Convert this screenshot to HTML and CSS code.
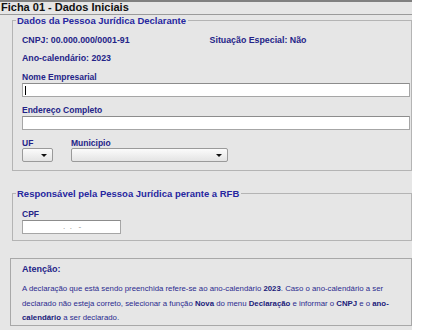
FILE: index.html
```html
<!DOCTYPE html>
<html lang="pt">
<head>
    <meta charset="UTF-8">
    <title>Ficha 01 - Dados Iniciais</title>
    <link rel="stylesheet" href="styles.css">
</head>
<body>
    <div class="page">
        <div class="title-bar">Ficha 01 - Dados Iniciais</div>

        <fieldset class="group group-pj">
            <legend>Dados da Pessoa Jurídica Declarante</legend>
            <div class="info-row first">
                <span class="info">CNPJ: 00.000.000/0001-91</span>
                <span class="info info-right">Situação Especial: Não</span>
            </div>
            <div class="info-row">
                <span class="info">Ano-calendário: 2023</span>
            </div>
            <div class="field">
                <label class="label">Nome Empresarial</label>
                <div class="text-box full caret"></div>
            </div>
            <div class="field">
                <label class="label">Endereço Completo</label>
                <div class="text-box full"></div>
            </div>
            <div class="field field-inline">
                <div class="field-col">
                    <label class="label">UF</label>
                    <div class="select-box uf"><span class="arrow"></span></div>
                </div>
                <div class="field-col">
                    <label class="label">Municipio</label>
                    <div class="select-box municipio"><span class="arrow"></span></div>
                </div>
            </div>
        </fieldset>

        <fieldset class="group group-resp">
            <legend>Responsável pela Pessoa Jurídica perante a RFB</legend>
            <div class="field first">
                <label class="label">CPF</label>
                <div class="text-box cpf"><span class="mask">.&nbsp;&nbsp;.&nbsp;&nbsp;&nbsp;-</span></div>
            </div>
        </fieldset>

        <div class="notice">
            <div class="notice-title">Atenção:</div>
            <p class="notice-text">A declaração que está sendo preenchida refere-se ao ano-calendário <b>2023</b>. Caso o ano-calendário a ser<br>declarado não esteja correto, selecionar a função <b>Nova</b> do menu <b>Declaração</b> e informar o <b>CNPJ</b> e o <b>ano-</b><br><b>calendário</b> a ser declarado.</p>
        </div>
    </div>
</body>
</html>
```

FILE: styles.css
```css
* {
    margin: 0;
    padding: 0;
    box-sizing: border-box;
}

body {
    background: #ffffff;
    font-family: 'Liberation Sans', Arial, sans-serif;
}

.page {
    width: 412px;
    height: 330px;
    background: #e6e6e6;
    overflow: hidden;
}

.title-bar {
    height: 15px;
    border-top: 2px solid #808080;
    border-bottom: 1px solid #9a9a9a;
    font-size: 11px;
    font-weight: bold;
    line-height: 11px;
    color: #111111;
    padding-left: 1px;
}

.group {
    margin-left: 12px;
    border: 1px solid #b4b4b4;
    padding: 0 0 0 9px;
}

.group legend {
    margin-left: -6px;
    padding: 0 2px 0 1px;
    font-size: 9.5px;
    font-weight: bold;
    line-height: 11px;
    color: #2626a0;
}

.group-pj {
    height: 156px;
}

.group-resp {
    margin-top: 17px;
    height: 53px;
}

.info-row {
    display: flex;
    height: 12px;
    margin-top: 6px;
}

.info-row.first {
    margin-top: 8px;
}

.info {
    font-size: 8.8px;
    font-weight: bold;
    line-height: 12px;
    color: #242488;
}

.info-right {
    margin-left: 80px;
}

.field {
    margin-top: 8px;
}

.field.first {
    margin-top: 10px;
}

.label {
    display: block;
    font-size: 8.5px;
    font-weight: bold;
    line-height: 11px;
    color: #242488;
    height: 11px;
}

.text-box {
    position: relative;
    height: 14px;
    background: #ffffff;
    border: 1px solid #a6a6a6;
    border-top-color: #8c8c8c;
}

.text-box.full {
    width: 388px;
}

.caret::before {
    content: '';
    position: absolute;
    left: 2px;
    top: 2px;
    width: 1px;
    height: 9px;
    background: #000000;
}

.text-box.cpf {
    width: 99px;
}

.mask {
    display: block;
    padding-left: 40px;
    font-size: 8px;
    line-height: 11px;
    color: #8a8a8a;
}

.field-inline {
    display: flex;
    gap: 18px;
}

.select-box {
    position: relative;
    height: 14px;
    margin-top: -1px;
    border: 1px solid #9a9a9a;
    border-radius: 2px;
    background: linear-gradient(#fbfbfb, #e4e4e4);
}

.select-box.uf {
    width: 31px;
}

.select-box.municipio {
    width: 157px;
}

.arrow {
    position: absolute;
    right: 5px;
    top: 5px;
    border-left: 3px solid transparent;
    border-right: 3px solid transparent;
    border-top: 3px solid #111111;
}

.notice {
    margin: 17px 0 0 10px;
    height: 68px;
    border: 1px solid #a8a8a8;
    padding: 4px 12px 0 11px;
}

.notice-title {
    font-size: 9px;
    font-weight: bold;
    line-height: 12px;
    color: #242488;
}

.notice-text {
    margin-top: 7px;
    font-size: 7.8px;
    line-height: 14.5px;
    white-space: nowrap;
    color: #2b2b8f;
}

.notice-text b {
    color: #20207a;
}
```
